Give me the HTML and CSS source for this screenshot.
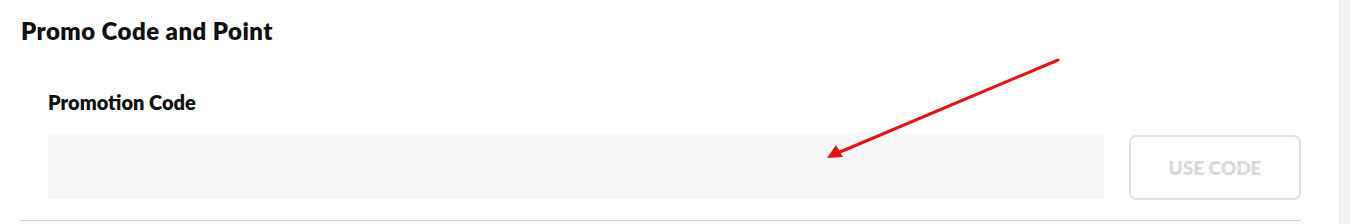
FILE: index.html
```html
<!DOCTYPE html>
<html lang="en">

<head>
  <meta charset="UTF-8">
  <meta name="viewport" content="width=device-width, initial-scale=1.0">
  <title>Promo Code and Point</title>
  <link rel="stylesheet" href="styles.css">
</head>

<body>
  <div class="page">
    <section class="promo">
      <h2 class="promoTitle">Promo Code and Point</h2>
      <div class="promoField">
        <label class="fieldLabel" for="promoCode">Promotion Code</label>
        <div class="fieldRow">
          <input type="text" id="promoCode" class="codeInput">
          <button class="useBtn" disabled>USE CODE</button>
        </div>
      </div>
    </section>
    <svg class="arrow" width="1350" height="224" viewBox="0 0 1350 224">
      <line x1="1058" y1="60" x2="840" y2="152" stroke="#e51212" stroke-width="3" stroke-linecap="round" />
      <polygon points="827,158 836,145 843,157" fill="#e51212" />
    </svg>
  </div>
  <div class="scrollbar"></div>
</body>

</html>
```

FILE: styles.css
```css
html,
body {
  margin: 0;
  height: 100%;
  background-color: #fff;
  font-family: Lato, "Open Sans", sans-serif;
  color: #111;
}

body {
  display: flex;
  overflow: hidden;
}

.page {
  position: relative;
  flex: 1;
}

.scrollbar {
  width: 10px;
  background-color: #f3f3f3;
  border-left: 1px solid #e8e8e8;
}

.promo {
  margin: 0 38px 0 20px;
  padding-top: 16px;
  border-bottom: 1px solid #cfcfcf;
  height: 221px;
  box-sizing: border-box;
}

.promoTitle {
  margin: 0 0 0 1px;
  font-size: 24px;
  font-weight: 800;
  letter-spacing: 0.45px;
  line-height: 30px;
}

.promoField {
  padding: 0 0 0 28px;
  margin-top: 44px;
}

.fieldLabel {
  display: block;
  font-size: 20px;
  font-weight: 800;
  line-height: 24px;
}

.fieldRow {
  display: flex;
  gap: 25px;
  margin-top: 20px;
}

.codeInput {
  flex: 1;
  height: 65px;
  border: none;
  background-color: #f7f7f7;
  padding: 0 16px;
  font-size: 16px;
}

.useBtn {
  width: 172px;
  height: 65px;
  margin-top: 1px;
  border: 2px solid #e2e2e2;
  border-radius: 7px;
  background-color: #fff;
  color: #dadada;
  font-family: inherit;
  font-size: 19px;
  font-weight: 800;
}

.arrow {
  position: absolute;
  left: 0;
  top: 0;
  pointer-events: none;
}
```
